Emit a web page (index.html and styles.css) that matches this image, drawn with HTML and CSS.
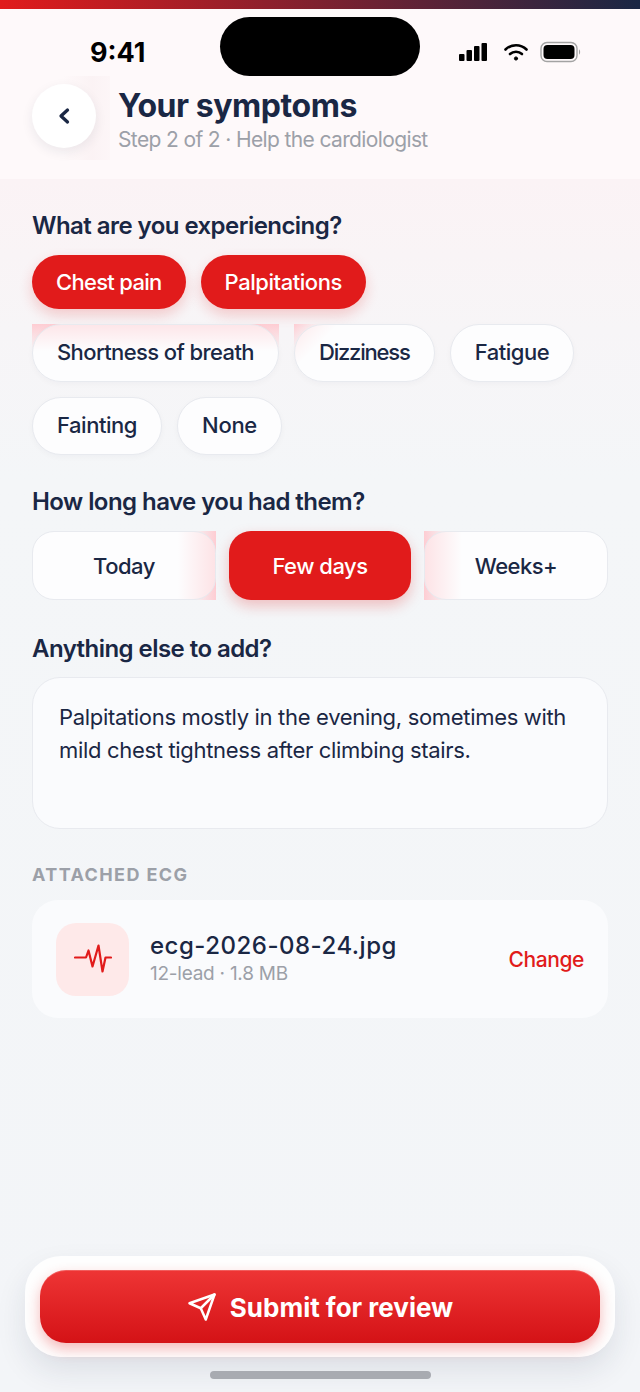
FILE: index.html
```html
<!DOCTYPE html>
<html lang="en">
<head>
    <meta charset="UTF-8">
    <meta name="viewport" content="width=device-width, initial-scale=1.0">
    <title>Your symptoms</title>
    <link rel="stylesheet" href="styles.css">
</head>
<body>
    <div class="screen">
        <div class="top-strip"></div>
        <header class="header">
            <div class="status-bar">
                <span class="time">9:41</span>
                <div class="island"></div>
                <div class="status-icons">
                    <svg class="signal" width="30" height="20" viewBox="0 0 30 20"><rect x="1" y="12" width="5.500" height="7" rx="1"/><rect x="8.500" y="8" width="5.500" height="11" rx="1"/><rect x="16" y="4" width="5.500" height="15" rx="1"/><rect x="23.500" y="1" width="5.500" height="18" rx="1"/></svg>
                    <svg width="26" height="20" viewBox="0 0 26 20" fill="none" stroke="#000" stroke-width="2.600" stroke-linecap="round"><path d="M2.500 7.500a15 15 0 0 1 21 0"/><path d="M7 12a9 9 0 0 1 12 0"/><circle cx="13" cy="16.500" r="1.600" fill="#000" stroke-width="1"/></svg>
                    <svg width="42" height="22" viewBox="0 0 42 22"><rect x="1" y="1.500" width="36" height="19" rx="6" fill="none" stroke="#a3a3a3" stroke-width="1.400"/><rect x="3.500" y="4" width="31" height="14" rx="4"/><path d="M39 8.500c1.500.5 1.500 4.500 0 5z" fill="#a3a3a3"/></svg>
                </div>
            </div>
            <div class="title-row">
                <div class="back-wrap">
                    <button class="back-btn">
                        <svg width="14" height="18" viewBox="0 0 14 18" fill="none" stroke="#1a2744" stroke-width="3.300" stroke-linecap="round" stroke-linejoin="round"><path d="M10.500 3L4 9l6.500 6"/></svg>
                    </button>
                </div>
                <div class="title-text">
                    <h1>Your symptoms</h1>
                    <p>Step 2 of 2 · Help the cardiologist</p>
                </div>
            </div>
        </header>

        <main class="content">
            <h2 class="first">What are you experiencing?</h2>
            <div class="chips chips-selected">
                <span class="chip selected">Chest pain</span>
                <span class="chip selected palp">Palpitations</span>
            </div>
            <div class="chips">
                <span class="chip-fade wide"><span class="chip tight">Shortness of breath</span></span>
                <span class="chip-fade corner"><span class="chip tighter">Dizziness</span></span>
                <span class="chip snug">Fatigue</span>
            </div>
            <div class="chips">
                <span class="chip snug">Fainting</span>
                <span class="chip">None</span>
            </div>

            <h2 class="how-long">How long have you had them?</h2>
            <div class="segments">
                <span class="seg-fade right"><span class="seg">Today</span></span>
                <span class="seg selected">Few days</span>
                <span class="seg-fade left"><span class="seg">Weeks+</span></span>
            </div>

            <h2 class="anything">Anything else to add?</h2>
            <div class="note">Palpitations mostly in the evening, sometimes with mild chest tightness after climbing stairs.</div>

            <h3 class="attached">ATTACHED ECG</h3>
            <div class="file-card">
                <div class="file-icon">
                    <svg width="38" height="32" viewBox="0 0 38 32" fill="none" stroke="#e11b1b" stroke-width="2.200" stroke-linecap="round" stroke-linejoin="round"><path d="M1 14.500h11l2.500-7 4 16 6-21 4 26 3-14h5.500"/></svg>
                </div>
                <div class="file-info">
                    <div class="file-name">ecg-2026-08-24.jpg</div>
                    <div class="file-meta">12-lead · 1.8 MB</div>
                </div>
                <span class="file-change">Change</span>
            </div>
        </main>

        <div class="dock">
            <button class="submit">
                <svg width="30" height="30" viewBox="0 0 24 24" fill="none" stroke="#fff" stroke-width="2" stroke-linecap="round" stroke-linejoin="round"><path d="M22 2L11 13"/><path d="M22 2l-7 20-4-9-9-4z"/></svg>
                <span class="submit-label">Submit for review</span>
            </button>
        </div>
        <div class="home-bar"></div>
    </div>
</body>
</html>
```

FILE: styles.css
```css
* {
    box-sizing: border-box;
}

body {
    margin: 0;
    font-family: Inter, "Noto Sans", sans-serif;
    color: #1a2744;
}

.screen {
    position: relative;
    width: 640px;
    height: 1392px;
    overflow: hidden;
    background: linear-gradient(180deg, #fbf3f5 179px, #f7f5f7 330px, #f4f6f8 480px, #f3f5f8 100%);
}

.top-strip {
    height: 9px;
    background: linear-gradient(90deg, #e11b1b, #1a2744);
}

.header {
    height: 170px;
    background: #fef9fa;
}

.status-bar {
    position: relative;
    display: flex;
    justify-content: space-between;
    align-items: center;
    height: 75px;
    padding: 11px 58px 0 90px;
}

.time {
    font-size: 27px;
    font-weight: 700;
    color: #000;
}

.island {
    position: absolute;
    left: 220px;
    top: 8px;
    width: 200px;
    height: 59px;
    border-radius: 30px;
    background: #000;
}

.status-icons {
    display: flex;
    align-items: center;
    gap: 11px;
}

.signal {
    margin-right: 4px;
}

.title-row {
    display: flex;
    align-items: flex-start;
    padding-left: 32px;
}

.back-wrap {
    width: 78px;
    height: 84px;
    margin-top: -8px;
    padding-top: 8px;
    background: linear-gradient(90deg, rgba(244, 228, 231, 0) 30px, rgba(244, 228, 231, 0.3) 60px, rgba(244, 228, 231, 0.15) 78px);
}

.back-btn {
    display: flex;
    align-items: center;
    justify-content: center;
    width: 64px;
    height: 64px;
    border: none;
    border-radius: 50%;
    background: #fff;
    box-shadow: 0 4px 12px rgba(26, 39, 68, 0.08);
}

.title-text {
    margin-left: 8px;
    margin-top: 3px;
}

.title-text h1 {
    margin: 0;
    font-size: 32px;
    line-height: 38px;
    font-weight: 700;
    letter-spacing: -0.45px;
}

.title-text p {
    margin: 1px 0 0;
    font-size: 21px;
    line-height: 28px;
    letter-spacing: -0.63px;
    color: #9ca0a8;
}

.content {
    padding: 0 32px;
}

h2 {
    margin: 0;
    font-size: 24px;
    line-height: 32px;
    font-weight: 600;
    letter-spacing: -0.55px;
}

h2.first {
    padding-top: 31px;
}

.chips {
    display: flex;
    gap: 15px;
    margin-top: 15px;
}

.chips-selected {
    margin-top: 13px;
}

.chip {
    display: block;
    height: 58px;
    padding: 0 24px;
    border: 1.5px solid #e8eaef;
    border-radius: 29px;
    background: #fdfdfe;
    box-shadow: 0 2px 6px rgba(26, 39, 68, 0.03);
    font-size: 22px;
    line-height: 55px;
    font-weight: 500;
    letter-spacing: -0.3px;
}

.chip.snug {
    letter-spacing: -0.45px;
}

.chip.tight {
    letter-spacing: -0.6px;
    background: linear-gradient(180deg, #fde6e9, #fdfdfe 26px);
}

.chip.tighter {
    letter-spacing: -1.2px;
    background: linear-gradient(135deg, #fdeaec, #fdfdfe 30px);
}

.chip.selected {
    height: 54px;
    border: none;
    line-height: 54px;
    letter-spacing: -0.7px;
    background: #e11b1b;
    color: #fff;
    box-shadow: 0 6px 14px rgba(225, 27, 27, 0.2);
}

.chip.selected.palp {
    letter-spacing: -0.45px;
}

.chip-fade {
    display: block;
    border-radius: 0;
}

.chip-fade.wide {
    background: linear-gradient(180deg, #fecdd3, rgba(254, 205, 211, 0) 26px);
}

.chip-fade.corner {
    background: linear-gradient(135deg, #fecdd3, rgba(254, 205, 211, 0) 18px);
}

.how-long {
    margin-top: 31px;
}

.segments {
    display: flex;
    gap: 13px;
    margin-top: 13px;
}

.seg {
    display: block;
    height: 69px;
    border: 1.5px solid #e8eaef;
    border-radius: 22px;
    background: #fdfdfe;
    font-size: 22px;
    line-height: 68px;
    font-weight: 500;
    letter-spacing: -0.5px;
    text-align: center;
}

.seg-fade {
    flex: 1;
    display: block;
}

.seg-fade.right {
    background: linear-gradient(90deg, rgba(254, 205, 211, 0) 160px, #fecdd3);
}

.seg-fade.left {
    background: linear-gradient(270deg, rgba(254, 205, 211, 0) 160px, #fecdd3);
}

.seg-fade.right .seg {
    background: linear-gradient(90deg, #fdfdfe 145px, #fde3e6);
}

.seg-fade.left .seg {
    background: linear-gradient(270deg, #fdfdfe 145px, #fde3e6);
}

.seg.selected {
    flex: 0 0 182px;
    border: none;
    line-height: 71px;
    background: #e11b1b;
    color: #fff;
    box-shadow: 0 6px 14px rgba(225, 27, 27, 0.25);
}

.anything {
    margin-top: 33px;
}

.note {
    height: 152px;
    margin-top: 12px;
    padding: 23px 26px;
    border: 1.5px solid #e8eaef;
    border-radius: 28px;
    background: #fafbfd;
    font-size: 22px;
    line-height: 33px;
    letter-spacing: -0.32px;
}

.attached {
    margin: 34px 0 0;
    font-size: 18px;
    line-height: 24px;
    font-weight: 700;
    letter-spacing: 1.4px;
    color: #9ca0a8;
}

.file-card {
    display: flex;
    align-items: center;
    height: 118px;
    margin-top: 13px;
    padding: 0 24px;
    border-radius: 26px;
    background: #fafbfd;
}

.file-icon {
    display: flex;
    align-items: center;
    justify-content: center;
    width: 73px;
    height: 73px;
    border-radius: 20px;
    background: #fee9e9;
}

.file-info {
    flex: 1;
    margin-left: 21px;
}

.file-name {
    font-size: 24px;
    line-height: 30px;
    font-weight: 500;
    letter-spacing: 0.5px;
}

.file-meta {
    font-size: 19px;
    line-height: 26px;
    letter-spacing: -0.25px;
    color: #9ca0a8;
}

.file-change {
    font-size: 21px;
    font-weight: 500;
    letter-spacing: -0.4px;
    color: #e11b1b;
}

.dock {
    position: absolute;
    left: 25px;
    top: 1256px;
    width: 590px;
    height: 101px;
    padding: 14px 15px;
    border-radius: 36px;
    background: rgba(255, 255, 255, 0.85);
    box-shadow: 0 14px 30px rgba(26, 39, 68, 0.1);
}

.submit {
    display: flex;
    align-items: center;
    justify-content: center;
    gap: 13px;
    width: 100%;
    height: 73px;
    border: none;
    border-radius: 26px;
    background: linear-gradient(180deg, #ee3535, #d41216);
    box-shadow: 0 6px 14px rgba(225, 27, 27, 0.3), inset 0 1px 0 rgba(255, 255, 255, 0.2);
    font-family: inherit;
    font-size: 26px;
    font-weight: 700;
    color: #fff;
}

.submit-label {
    padding-top: 2px;
}

.home-bar {
    position: absolute;
    left: 210px;
    top: 1371px;
    width: 221px;
    height: 8px;
    border-radius: 4px;
    background: #a8abb1;
}
```
